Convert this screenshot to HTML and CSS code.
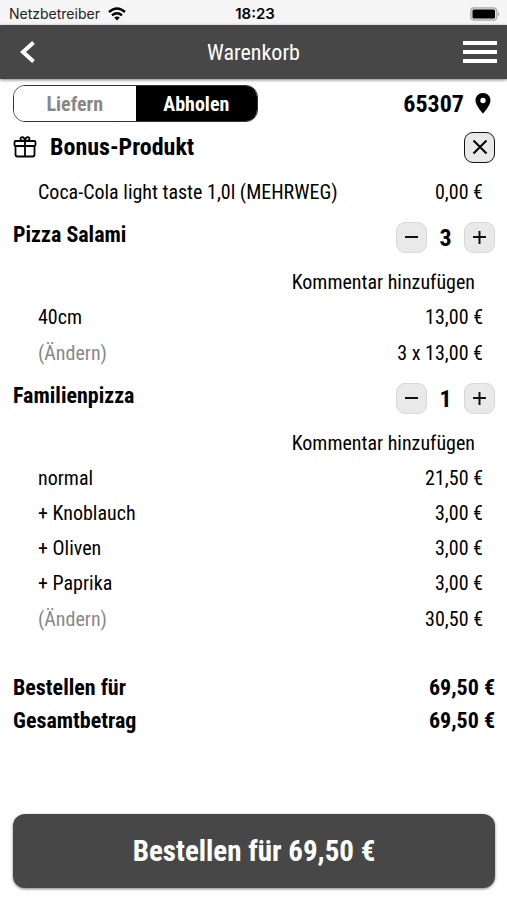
FILE: index.html
```html
<!DOCTYPE html>
<html lang="de">
<head>
<meta charset="utf-8">
<meta name="viewport" content="width=device-width, initial-scale=1">
<title>Warenkorb</title>
<link rel="stylesheet" href="styles.css">
</head>
<body>
<div class="status">
  <span class="carrier">Netzbetreiber
    <svg width="18" height="14" viewBox="0 0 18 14" aria-hidden="true"><g fill="none" stroke="#000" stroke-width="2.4"><path d="M1 5Q9-2 17 5"/><path d="M4 8.3Q9 4 14 8.3"/></g><path d="M6.200 10.600Q9 8.400 11.800 10.600L9 13.400Z"/></svg>
  </span>
  <time class="clock">18:23</time>
  <svg class="battery" width="31" height="14" viewBox="0 0 31 14" aria-hidden="true"><rect x=".8" y=".8" width="26" height="12.400" rx="3.500" fill="#ddd" stroke="#aaa" stroke-width="1.200"/><rect x="2.500" y="2.500" width="22.500" height="9" rx="1.500"/><path d="M28 4.500q2.500 2.500 0 5z" fill="#aaa"/></svg>
</div>
<header class="bar">
  <button class="icon-btn back" aria-label="Zurück"><svg width="16" height="22" viewBox="0 0 16 22"><path d="M13.500 1.500L3 11l10.500 9.500" fill="none" stroke="#fff" stroke-width="4"/></svg></button>
  <h1>Warenkorb</h1>
  <button class="icon-btn menu" aria-label="Menü"><svg width="34" height="24" viewBox="0 0 34 24"><path d="M0 3h34M0 12h34M0 21h34" stroke="#fff" stroke-width="4"/></svg></button>
</header>
<main>
  <div class="mode-row">
    <div class="toggle">
      <button aria-pressed="false">Liefern</button>
      <button class="active" aria-pressed="true">Abholen</button>
    </div>
    <a class="zip" href="#ort">65307
      <svg width="16" height="21" viewBox="0 0 16 21" aria-hidden="true"><path fill-rule="evenodd" d="M8 0C3.600 0 .5 3.200.5 7.500.5 12.500 8 20.500 8 20.500S15.500 12.500 15.500 7.500C15.500 3.200 12.400 0 8 0ZM8 4.800A2.700 2.700 0 1 1 8 10.200 2.700 2.700 0 0 1 8 4.800Z"/></svg>
    </a>
  </div>
  <section class="bonus">
    <div class="bonus-head">
      <svg width="24" height="22" viewBox="0 0 24 22" aria-hidden="true"><g fill="none" stroke="#000" stroke-width="1.800"><rect x="1.500" y="5" width="21" height="5" rx="1.200"/><path d="M2.500 10v8.500q0 2 2 2h15q2 0 2-2V10M12 5v15.500M12 5C9 5 7.500 4.300 7.500 2.800 7.500.2 11.500.2 12 5 12.500.2 16.500.2 16.500 2.800 16.500 4.300 15 5 12 5Z"/></g></svg>
      <h2>Bonus-Produkt</h2>
      <button class="square close" aria-label="Entfernen"><svg width="16" height="16" viewBox="0 0 16 16"><path d="M1.500 1.500l13 13m0-13l-13 13" stroke="#000" stroke-width="2"/></svg></button>
    </div>
    <div class="line sum"><span>Coca-Cola light taste 1,0l (MEHRWEG)</span><span>0,00 €</span></div>
  </section>
  <section class="item">
    <div class="item-head">
      <h3>Pizza Salami</h3>
      <div class="stepper">
        <button class="square" aria-label="Weniger"><svg width="13" height="13" viewBox="0 0 13 13"><path d="M0 6h13" stroke="#111" stroke-width="2"/></svg></button>
        <output>3</output>
        <button class="square" aria-label="Mehr"><svg width="13" height="13" viewBox="0 0 13 13"><path d="M0 6h13M6.500 0v13" stroke="#111" stroke-width="2"/></svg></button>
      </div>
    </div>
    <a class="comment" href="#kommentar1">Kommentar hinzufügen</a>
    <div class="line"><span>40cm</span><span>13,00 €</span></div>
    <div class="line sum"><a class="edit" href="#aendern1">(Ändern)</a><span>3 x 13,00 €</span></div>
  </section>
  <section class="item">
    <div class="item-head">
      <h3>Familienpizza</h3>
      <div class="stepper">
        <button class="square" aria-label="Weniger"><svg width="13" height="13" viewBox="0 0 13 13"><path d="M0 6h13" stroke="#111" stroke-width="2"/></svg></button>
        <output>1</output>
        <button class="square" aria-label="Mehr"><svg width="13" height="13" viewBox="0 0 13 13"><path d="M0 6h13M6.500 0v13" stroke="#111" stroke-width="2"/></svg></button>
      </div>
    </div>
    <a class="comment" href="#kommentar2">Kommentar hinzufügen</a>
    <div class="line"><span>normal</span><span>21,50 €</span></div>
    <div class="line"><span>+ Knoblauch</span><span>3,00 €</span></div>
    <div class="line"><span>+ Oliven</span><span>3,00 €</span></div>
    <div class="line"><span>+ Paprika</span><span>3,00 €</span></div>
    <div class="line sum"><a class="edit" href="#aendern2">(Ändern)</a><span>30,50 €</span></div>
  </section>
  <section class="totals">
    <div><span>Bestellen für</span><span>69,50 €</span></div>
    <div><span>Gesamtbetrag</span><span>69,50 €</span></div>
  </section>
  <button class="order">Bestellen für 69,50 €</button>
</main>
</body>
</html>
```
FILE: styles.css
```css
* { box-sizing: border-box; }
body {
  margin: 0;
  min-height: 100vh;
  display: flex;
  flex-direction: column;
  background: #fff;
  color: #000;
  font-family: "Roboto Condensed", Roboto, sans-serif;
  font-size: 20px;
}
h1, h2, h3 { margin: 0; }
button { font: inherit; padding: 0; border: 0; cursor: pointer; }
a { color: inherit; text-decoration: none; }
svg { display: block; flex: none; }

.status {
  display: grid;
  grid-template-columns: 1fr auto 1fr;
  align-items: center;
  height: 25px;
  padding: 2px 6px 0 9px;
  background: #f5f5f5;
  font-family: Inter, sans-serif;
  font-size: 15px;
}
.carrier { display: flex; align-items: center; gap: 8px; color: #222; font-size: 14px; }
.clock { font-weight: 600; }
.battery { justify-self: end; }

.bar {
  display: grid;
  grid-template-columns: 1fr auto 1fr;
  align-items: center;
  height: 54px;
  padding: 0 10px;
  background: #474747;
  color: #fff;
  box-shadow: 0 1px 3px rgba(0, 0, 0, .5);
}
.bar h1 { font-size: 22px; font-weight: 400; }
.icon-btn { background: none; }
.back { justify-self: start; margin-left: 10px; }
.menu { justify-self: end; }

main {
  flex: 1;
  display: flex;
  flex-direction: column;
  padding: 6px 12px 12px 13px;
}
.mode-row { display: flex; justify-content: space-between; align-items: center; }
.toggle {
  display: flex;
  width: 245px;
  height: 37px;
  border: 1px solid #333;
  border-radius: 12px;
  overflow: hidden;
  font-weight: 700;
}
.toggle button { flex: 1; background: #fff; color: #888; }
.toggle .active { background: #000; color: #fff; }
.zip {
  display: flex;
  align-items: center;
  gap: 11px;
  padding-right: 4px;
  font-size: 24px;
  font-weight: 700;
}

.bonus-head { display: flex; align-items: center; height: 36px; margin: 7px 0 9px; }
.bonus-head h2 { flex: 1; margin-left: 13px; font-size: 24px; }
.square {
  display: grid;
  place-items: center;
  width: 31px;
  height: 31px;
  background: #e9e9e9;
  border: 1px solid #d8d8d8;
  border-radius: 9px;
}
.close { border-color: #111; }

.line {
  display: flex;
  justify-content: space-between;
  padding: 0 12px 0 25px;
  line-height: 35px;
}
.sum { line-height: 36px; }
.edit { color: #888; }
.item { margin-top: 12px; }
.item-head { display: flex; justify-content: space-between; margin-bottom: 11px; }
.item-head h3 { font-size: 22px; line-height: 26px; }
.stepper { display: flex; align-items: center; }
.stepper output { width: 37px; text-align: center; font-size: 24px; line-height: 30px; font-weight: 700; }
.comment { display: block; padding-right: 20px; text-align: right; line-height: 36px; }

.totals { margin-top: 34px; font-size: 22px; font-weight: 700; line-height: 33px; }
.totals div { display: flex; justify-content: space-between; }

.order {
  margin-top: auto;
  height: 74px;
  border-radius: 12px;
  background: #474747;
  color: #fff;
  font-size: 29px;
  font-weight: 700;
  box-shadow: 0 1px 3px rgba(0, 0, 0, .5);
}
```
